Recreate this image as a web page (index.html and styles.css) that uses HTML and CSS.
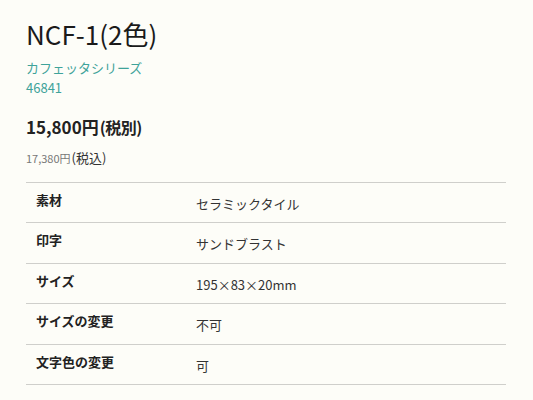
FILE: index.html
```html
<!DOCTYPE html>
<html lang="ja">
<head>
<meta charset="utf-8">
<link rel="stylesheet" href="styles.css">
</head>
<body>
<div class="product">
  <h1 class="title">NCF-1(2色)</h1>
  <div class="series">カフェッタシリーズ</div>
  <div class="code">46841</div>
  <div class="price">15,800円<span class="price-note">(税別)</span></div>
  <div class="price-tax"><span class="tax-amount">17,380円</span><span class="tax-note">(税込)</span></div>
  <table class="spec">
    <tr><th>素材</th><td>セラミックタイル</td></tr>
    <tr><th>印字</th><td>サンドブラスト</td></tr>
    <tr><th>サイズ</th><td>195×83×20mm</td></tr>
    <tr><th>サイズの変更</th><td>不可</td></tr>
    <tr><th>文字色の変更</th><td>可</td></tr>
  </table>
</div>
</body>
</html>
```
FILE: styles.css
```css
html, body {
  margin: 0;
  padding: 0;
  background: #fdfdf8;
}
body {
  font-family: "Noto Sans CJK JP", "Noto Sans", sans-serif;
  color: #222;
}
.product {
  padding: 14px 27px 0 26px;
  width: 480px;
}
.title {
  font-size: 26px;
  font-weight: 400;
  line-height: 40px;
  margin: 0 0 4px;
  color: #1a1a1a;
}
.series, .code {
  color: #3fa39a;
  font-size: 13px;
  line-height: 20px;
}
.price {
  font-size: 17px;
  font-weight: 700;
  margin-top: 17px;
  line-height: 24px;
}
.price-note {
  font-size: 16px;
  margin-left: 1px;
  letter-spacing: -0.5px;
}
.price-tax {
  margin-top: 9px;
  line-height: 16px;
}
.tax-amount {
  font-size: 11px;
  color: #777;
}
.tax-note {
  font-size: 13px;
  color: #333;
  margin-left: 1px;
}
.spec {
  width: 480px;
  border-collapse: collapse;
  margin-top: 16px;
  font-size: 13px;
}
.spec tr {
  border-top: 1px solid #cfcfcb;
  border-bottom: 1px solid #cfcfcb;
}
.spec th {
  text-align: left;
  font-weight: 700;
  width: 160px;
  padding: 7px 0 0 10px;
  height: 32.4px;
  vertical-align: top;
}
.spec td {
  padding: 11px 0 0 0;
  vertical-align: top;
  color: #333;
}
```
